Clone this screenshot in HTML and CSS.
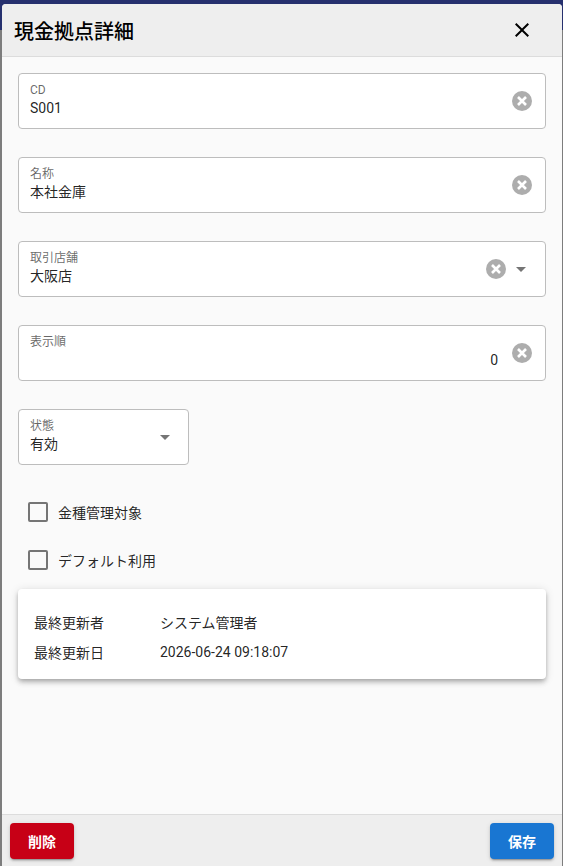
FILE: index.html
```html
<!DOCTYPE html>
<html lang="ja">
<head>
    <meta charset="UTF-8">
    <meta name="viewport" content="width=device-width, initial-scale=1.0">
    <title>現金拠点詳細</title>
    <link rel="stylesheet" href="styles.css">
</head>
<body>
    <div class="dialog">
        <header class="dialog-header">
            <h1>現金拠点詳細</h1>
            <button class="close-btn" type="button" aria-label="閉じる">
                <svg viewBox="0 0 24 24" width="24" height="24"><path d="M19 6.41 17.59 5 12 10.59 6.41 5 5 6.41 10.59 12 5 17.59 6.41 19 12 13.41 17.59 19 19 17.59 13.41 12z"/></svg>
            </button>
        </header>

        <main class="dialog-body">
            <div class="field">
                <div class="field-text">
                    <span class="field-label">CD</span>
                    <span class="field-value">S001</span>
                </div>
                <svg class="clear-icon" viewBox="0 0 24 24" width="24" height="24"><circle cx="12" cy="12" r="10"/><path class="clear-x" d="M8 8l8 8M16 8l-8 8"/></svg>
            </div>

            <div class="field">
                <div class="field-text">
                    <span class="field-label">名称</span>
                    <span class="field-value">本社金庫</span>
                </div>
                <svg class="clear-icon" viewBox="0 0 24 24" width="24" height="24"><circle cx="12" cy="12" r="10"/><path class="clear-x" d="M8 8l8 8M16 8l-8 8"/></svg>
            </div>

            <div class="field field-combo">
                <div class="field-text">
                    <span class="field-label">取引店舗</span>
                    <span class="field-value">大阪店</span>
                </div>
                <svg class="clear-icon" viewBox="0 0 24 24" width="24" height="24"><circle cx="12" cy="12" r="10"/><path class="clear-x" d="M8 8l8 8M16 8l-8 8"/></svg>
                <svg class="arrow-icon" viewBox="0 0 24 24" width="24" height="24"><path d="m7 10 5 5 5-5z"/></svg>
            </div>

            <div class="field">
                <div class="field-text">
                    <span class="field-label">表示順</span>
                    <span class="field-value field-number">0</span>
                </div>
                <svg class="clear-icon" viewBox="0 0 24 24" width="24" height="24"><circle cx="12" cy="12" r="10"/><path class="clear-x" d="M8 8l8 8M16 8l-8 8"/></svg>
            </div>

            <div class="field field-select">
                <div class="field-text">
                    <span class="field-label">状態</span>
                    <span class="field-value">有効</span>
                </div>
                <svg class="arrow-icon" viewBox="0 0 24 24" width="24" height="24"><path d="m7 10 5 5 5-5z"/></svg>
            </div>

            <label class="check-row"><span class="check-box"></span>金種管理対象</label>
            <label class="check-row"><span class="check-box"></span>デフォルト利用</label>

            <section class="info-card">
                <div class="info-row"><span class="info-name">最終更新者</span><span>システム管理者</span></div>
                <div class="info-row"><span class="info-name">最終更新日</span><span>2026-06-24 09:18:07</span></div>
            </section>
        </main>

        <footer class="dialog-footer">
            <button class="btn btn-delete" type="button">削除</button>
            <button class="btn btn-save" type="button">保存</button>
        </footer>
    </div>
</body>
</html>
```

FILE: styles.css
```css
* {
    box-sizing: border-box;
}
html, body {
    height: 100%;
}
body {
    margin: 0;
    padding: 4px 1px 0 2px;
    background: linear-gradient(#26306e 0, #26306e 30px, #7d7d7d 30px);
    font-family: Roboto, "Noto Sans CJK JP", sans-serif;
    color: rgba(0, 0, 0, 0.87);
    overflow: hidden;
}
.dialog {
    height: 862px;
    display: flex;
    flex-direction: column;
    background: #fafafa;
    border-radius: 4px 4px 0 0;
}
.dialog-header {
    height: 53px;
    flex: none;
    display: flex;
    align-items: center;
    justify-content: space-between;
    padding: 0 28px 0 12px;
    background: #eeeeee;
    border-bottom: 1px solid #dcdcdc;
    border-radius: 4px 4px 0 0;
}
.dialog-header h1 {
    margin: 0;
    font-size: 20px;
    font-weight: 500;
    color: #000;
}
.close-btn {
    display: flex;
    padding: 0;
    border: 0;
    background: none;
}
.dialog-body {
    flex: 1;
    padding: 16px 16px 0;
}
.field {
    height: 56px;
    display: flex;
    align-items: center;
    margin-bottom: 28px;
    padding: 0 11px 0 11px;
    background: #fff;
    border: 1px solid #bdbdbd;
    border-radius: 4px;
}
.field-text {
    flex: 1;
    display: flex;
    flex-direction: column;
    min-width: 0;
    padding-bottom: 3px;
}
.field-label {
    font-size: 12px;
    line-height: 16px;
    color: rgba(0, 0, 0, 0.6);
}
.field-value {
    font-size: 14px;
    line-height: 20px;
}
.field-number {
    text-align: right;
    padding-right: 12px;
}
.clear-icon {
    fill: #adadad;
    flex: none;
}
.clear-x {
    fill: none;
    stroke: #fff;
    stroke-width: 2.6;
}
.arrow-icon {
    fill: #757575;
    flex: none;
}
.field-combo {
    padding-right: 12px;
}
.field-combo .clear-icon {
    margin-right: 1px;
}
.field-select {
    width: 171px;
    padding-right: 11px;
    margin-bottom: 23px;
}
.check-row {
    height: 48px;
    display: flex;
    align-items: center;
    gap: 10px;
    padding-left: 10px;
    font-size: 14px;
}
.check-box {
    width: 20px;
    height: 20px;
    border: 2px solid #757575;
    border-radius: 2px;
}
.info-card {
    height: 90px;
    margin-top: 5px;
    padding: 18px 16px;
    background: #fff;
    border-radius: 4px;
    box-shadow: 0 2px 4px -1px rgba(0, 0, 0, 0.2), 0 4px 5px rgba(0, 0, 0, 0.14), 0 1px 10px rgba(0, 0, 0, 0.12);
    font-size: 14px;
}
.info-row {
    height: 30px;
    display: flex;
    align-items: center;
}
.info-name {
    width: 126px;
}
.dialog-footer {
    height: 52px;
    flex: none;
    display: flex;
    justify-content: space-between;
    padding: 8px 8px 0;
    background: #eeeeee;
    border-top: 1px solid #dcdcdc;
}
.btn {
    width: 64px;
    height: 36px;
    border: 0;
    border-radius: 4px;
    color: #fff;
    font-family: inherit;
    font-size: 14px;
    font-weight: 700;
    box-shadow: 0 3px 1px -2px rgba(0, 0, 0, 0.2), 0 2px 2px rgba(0, 0, 0, 0.14), 0 1px 5px rgba(0, 0, 0, 0.12);
}
.btn-delete {
    background: #c70016;
}
.btn-save {
    background: #1976d2;
}
```
